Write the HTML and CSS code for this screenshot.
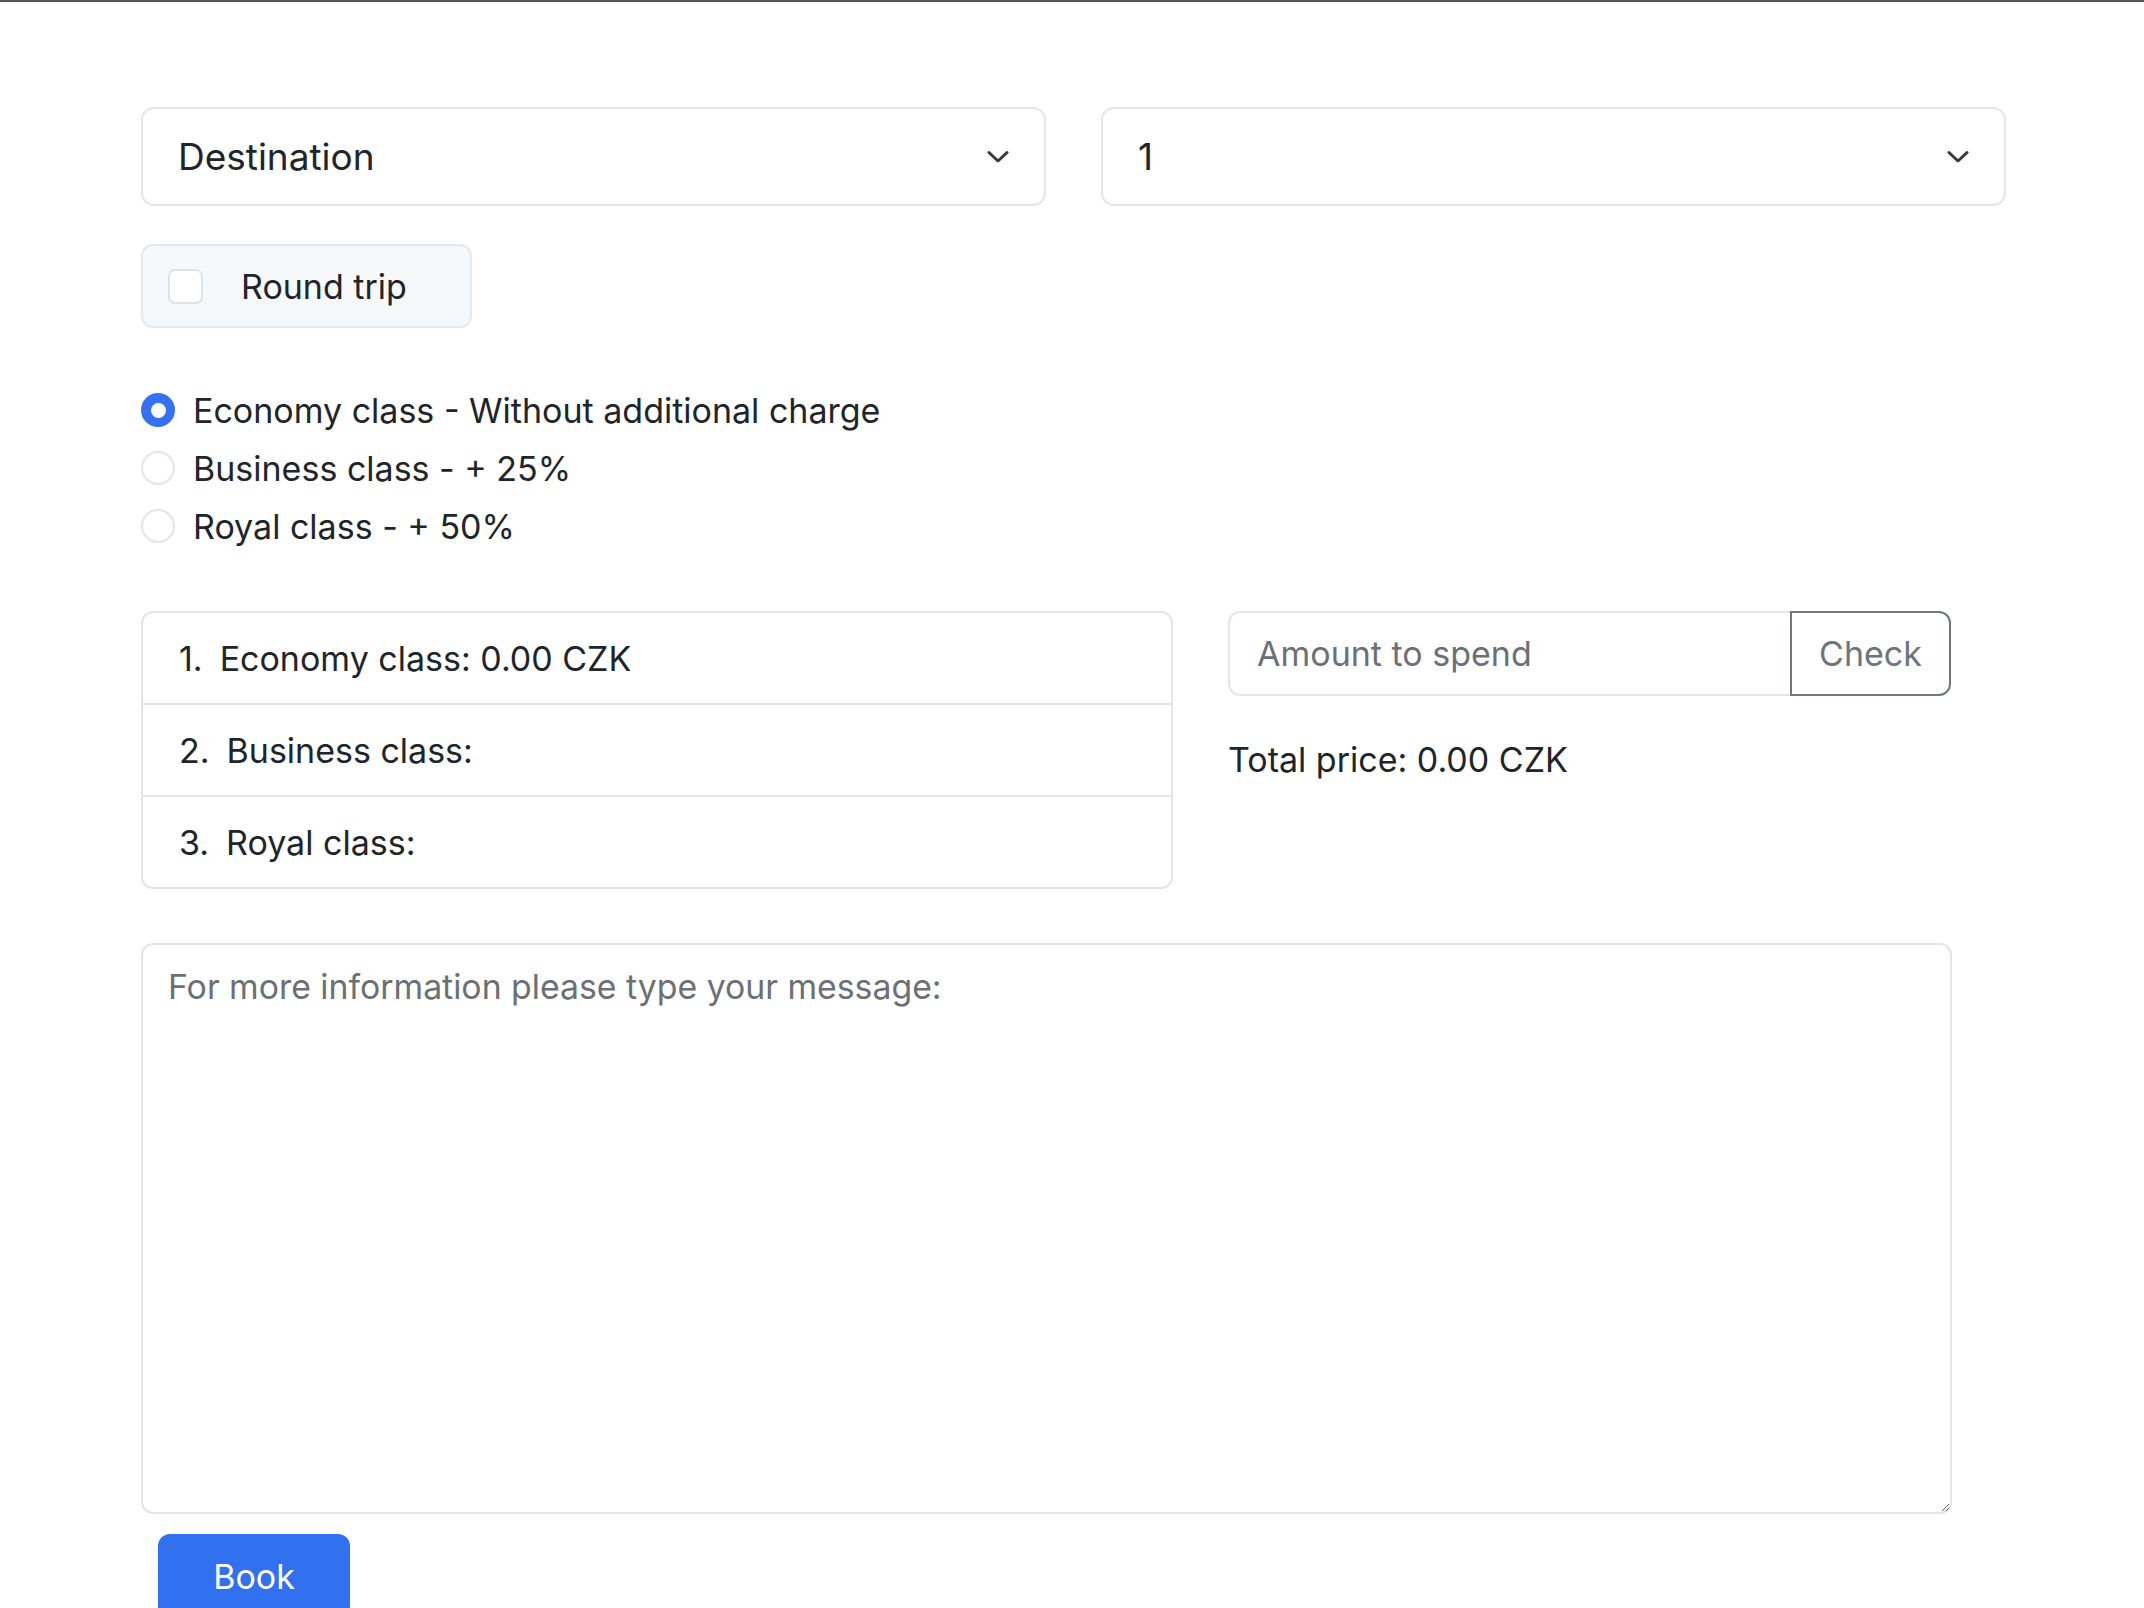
FILE: index.html
```html
<!DOCTYPE html>
<html lang="en">
<head>
<meta charset="utf-8">
<title>Booking</title>
<link rel="stylesheet" href="styles.css">
</head>
<body>
<main class="page">
  <div class="selects">
    <div class="select select-lg">
      <span>Destination</span>
      <svg class="chev" width="22" height="14" viewBox="0 0 22 14"><path d="M2 2.5 L11 11 L20 2.5" fill="none" stroke="#343a40" stroke-width="3" stroke-linecap="round" stroke-linejoin="round"/></svg>
    </div>
    <div class="select select-lg">
      <span>1</span>
      <svg class="chev" width="22" height="14" viewBox="0 0 22 14"><path d="M2 2.5 L11 11 L20 2.5" fill="none" stroke="#343a40" stroke-width="3" stroke-linecap="round" stroke-linejoin="round"/></svg>
    </div>
  </div>

  <label class="roundtrip"><span class="checkbox"></span><span>Round trip</span></label>

  <div class="radios">
    <div class="radio-row"><span class="radio checked"><span class="dot"></span></span><span>Economy class - Without additional charge</span></div>
    <div class="radio-row"><span class="radio"></span><span>Business class - + 25%</span></div>
    <div class="radio-row"><span class="radio"></span><span>Royal class - + 50%</span></div>
  </div>

  <div class="summary">
    <ol class="list">
      <li><span class="num">1.</span><span>Economy class: 0.00 CZK</span></li>
      <li><span class="num">2.</span><span>Business class:</span></li>
      <li><span class="num">3.</span><span>Royal class:</span></li>
    </ol>
    <div class="side">
      <div class="input-group">
        <input class="amount" type="text" placeholder="Amount to spend">
        <button class="check" type="button">Check</button>
      </div>
      <p class="total">Total price: 0.00 CZK</p>
    </div>
  </div>

  <textarea class="message" placeholder="For more information please type your message:"></textarea>

  <button class="book" type="button">Book</button>
</main>
</body>
</html>
```

FILE: styles.css
```css
html, body {
  margin: 0;
  padding: 0;
  background: #ffffff;
}

body {
  border-top: 2px solid #555555;
  font-family: Inter, "Noto Sans", "Liberation Sans", sans-serif;
  color: #212529;
  font-size: 34px;
  overflow: hidden;
  height: 1606px;
}

.page {
  padding: 105px 0 0 141px;
}

.selects {
  display: grid;
  grid-template-columns: 905px 905px;
  column-gap: 55px;
}

.select {
  box-sizing: border-box;
  height: 99px;
  border: 2px solid #e3e5e8;
  border-radius: 13px;
  padding: 0 35px 0 35px;
  display: flex;
  align-items: center;
  justify-content: space-between;
  font-size: 37px;
  background: #fff;
}

.chev {
  display: block;
}

.roundtrip {
  margin-top: 38px;
  box-sizing: border-box;
  width: 331px;
  height: 84px;
  display: flex;
  align-items: center;
  gap: 38px;
  padding-left: 25px;
  background: #f7f8f9;
  border: 2px solid #e6e8eb;
  border-radius: 12px;
}

.checkbox {
  box-sizing: border-box;
  width: 35px;
  height: 35px;
  border: 2px solid #e0e3e6;
  border-radius: 7px;
  background: #fff;
  flex: none;
}

.radios {
  margin-top: 53px;
}

.radio-row {
  height: 58px;
  display: flex;
  align-items: center;
  gap: 18px;
}

.radio {
  box-sizing: border-box;
  width: 34px;
  height: 34px;
  border-radius: 50%;
  border: 2px solid #e3e5e8;
  background: #fff;
  flex: none;
  display: flex;
  align-items: center;
  justify-content: center;
}

.radio.checked {
  background: #3571f0;
  border-color: #3571f0;
}

.dot {
  width: 15px;
  height: 15px;
  border-radius: 50%;
  background: #fff;
}

.summary {
  margin-top: 56px;
  display: grid;
  grid-template-columns: 1032px 723px;
  column-gap: 55px;
  align-items: start;
}

.list {
  margin: 0;
  padding: 0;
  list-style: none;
  border: 2px solid #e3e5e8;
  border-radius: 12px;
}

.list li {
  height: 90px;
  display: flex;
  align-items: center;
  padding-left: 36px;
  border-bottom: 2px solid #e3e5e8;
}

.list li:last-child {
  border-bottom: none;
}

.num {
  margin-right: 17px;
}

.input-group {
  display: flex;
  height: 85px;
}

.amount {
  flex: 1;
  min-width: 0;
  box-sizing: border-box;
  height: 85px;
  border: 2px solid #e3e5e8;
  border-right: none;
  border-radius: 12px 0 0 12px;
  padding: 0 0 0 27px;
  font-family: inherit;
  font-size: 34px;
  color: #212529;
  outline: none;
}

.amount::placeholder,
.message::placeholder {
  color: #6c7075;
  opacity: 1;
}

.check {
  box-sizing: border-box;
  width: 161px;
  height: 85px;
  border: 2px solid #71777d;
  border-radius: 0 12px 12px 0;
  background: #fff;
  color: #6c757d;
  font-family: inherit;
  font-size: 34px;
  padding: 0;
}

.total {
  margin: 38px 0 0;
  line-height: 52px;
}

.message {
  display: block;
  margin-top: 54px;
  box-sizing: border-box;
  width: 1811px;
  height: 571px;
  border: 2px solid #e3e5e8;
  border-radius: 12px;
  padding: 16px 25px;
  font-family: inherit;
  font-size: 33.8px;
  line-height: 52px;
  color: #212529;
  outline: none;
}

.book {
  display: block;
  margin: 20px 0 0 17px;
  width: 192px;
  height: 84px;
  border: none;
  border-radius: 12px;
  background: #3170ef;
  color: #fff;
  font-family: inherit;
  font-size: 34px;
  padding: 0;
}
```
